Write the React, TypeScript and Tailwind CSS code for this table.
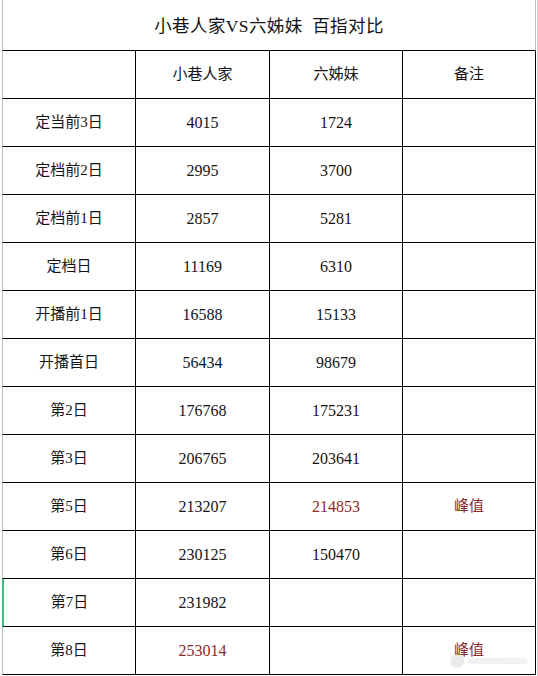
import React from 'react';

type Row = { label: string; a: string; b: string; note?: string; aRed?: boolean; bRed?: boolean };

const rows: Row[] = [
  { label: '定当前3日', a: '4015', b: '1724' },
  { label: '定档前2日', a: '2995', b: '3700' },
  { label: '定档前1日', a: '2857', b: '5281' },
  { label: '定档日', a: '11169', b: '6310' },
  { label: '开播前1日', a: '16588', b: '15133' },
  { label: '开播首日', a: '56434', b: '98679' },
  { label: '第2日', a: '176768', b: '175231' },
  { label: '第3日', a: '206765', b: '203641' },
  { label: '第5日', a: '213207', b: '214853', note: '峰值', bRed: true },
  { label: '第6日', a: '230125', b: '150470' },
  { label: '第7日', a: '231982', b: '' },
  { label: '第8日', a: '253014', b: '', note: '峰值', aRed: true },
];

const font = { fontFamily: '"Liberation Serif", "Noto Sans CJK SC", serif' };
const red = 'text-[#8a2b2b]';

export default function App() {
  return (
    <div className="w-[538px] h-[676px] bg-white overflow-hidden relative text-[#141414]" style={font}>
      {/* title row */}
      <div className="h-[51px] ml-[2px] w-[534px] border-l border-[#bdbdbd] border-r border-r-[#bdbdbd] border-b border-b-black flex items-center justify-center pt-[3px] text-[17.5px] tracking-[0.4px]">
        小巷人家VS六姊妹&nbsp;&nbsp;百指对比
      </div>
      <div className="ml-[2px] grid grid-cols-[134px_134px_133px_133px] w-[534px]">
        {/* header */}
        <div className="h-[48px] border-l border-[#bdbdbd] border-r border-r-black border-b border-b-black" />
        <div className="h-[48px] border-r border-b border-black flex items-center justify-center text-[15px]">小巷人家</div>
        <div className="h-[48px] border-r border-b border-black flex items-center justify-center text-[15px]">六姊妹</div>
        <div className="h-[48px] border-r border-b border-black flex items-center justify-center text-[15px]">备注</div>
        {rows.map((r, i) => (
          <React.Fragment key={i}>
            <div
              className={`h-[48px] border-l ${r.label === '第7日' ? 'border-l-[#3fbf7f] border-l-2' : 'border-[#bdbdbd]'} border-r border-r-black border-b border-b-black flex items-center justify-center text-[15px]`}
            >
              {r.label}
            </div>
            <div className={`h-[48px] border-r border-b border-black flex items-center justify-center text-[16px] ${r.aRed ? red : ''}`}>
              {r.a}
            </div>
            <div className={`h-[48px] border-r border-b border-black flex items-center justify-center text-[16px] ${r.bRed ? red : ''}`}>
              {r.b}
            </div>
            <div className={`h-[48px] border-r border-b border-black flex items-center justify-center text-[15px] ${red}`}>
              {r.note ?? ''}
            </div>
          </React.Fragment>
        ))}
      </div>
      {/* watermark */}
      <div className="absolute right-[10px] bottom-[8px] flex items-center gap-1 opacity-40">
        <div className="w-[14px] h-[14px] rounded-full bg-[#cfcfcf]" />
        <div className="w-[60px] h-[6px] rounded bg-[#dedede]" />
      </div>
      {/* right gray gridline */}
      <div className="absolute top-0 right-0 w-px h-full bg-[#cfcfcf]" />
    </div>
  );
}
